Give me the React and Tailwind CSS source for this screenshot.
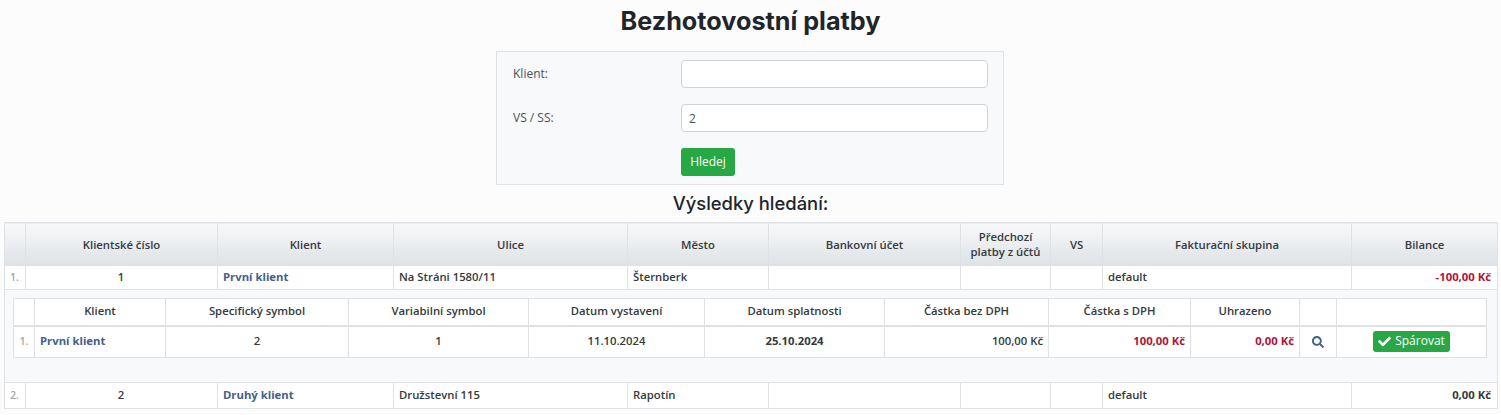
import React from "react";
import { FaCheck, FaSearch } from "react-icons/fa";

const outerCols = [21, 192, 176, 234, 141, 192, 90, 52, 249, 146];
const innerCols = [21, 131, 183, 180, 176, 180, 164, 142, 109, 37, 150];

const thO = "border border-[#dee2e6] bg-gradient-to-b from-[#f8f9fa] to-[#dee2e6] px-1 py-0 text-center font-semibold text-[#343a40] leading-[15px]";
const tdO = "border border-[#dee2e6] bg-white pl-[5px] pr-[6px] py-0 font-semibold text-[#343a40]";
const thI = "border border-[#dee2e6] border-b-2 bg-white px-1 py-0 text-center font-semibold text-[#343a40]";
const tdI = "border border-[#dee2e6] bg-white px-[5px] py-0 font-semibold text-[#343a40]";
const link = "font-bold text-[#456089]";
const red = "font-bold text-[#b01338]";
const idx = "block text-center text-[10px] text-[#a3a3a3]";

function Row({ n, num, name, street, city, balance, balanceClass, h }) {
  return (
    <tr className={h}>
      <td className={tdO}><span className={idx}>{n}</span></td>
      <td className={`${tdO} text-center`}>{num}</td>
      <td className={tdO}><span className={link}>{name}</span></td>
      <td className={tdO}>{street}</td>
      <td className={tdO}>{city}</td>
      <td className={tdO}></td>
      <td className={tdO}></td>
      <td className={tdO}></td>
      <td className={tdO}>default</td>
      <td className={`${tdO} text-right`}><span className={balanceClass}>{balance}</span></td>
    </tr>
  );
}

export default function App() {
  return (
    <div className="min-h-[415px] overflow-hidden bg-[#fcfcfd] font-['Open_Sans',sans-serif] text-[#343a40]">
      <h1 className="pt-[3px] text-center font-['Inter',sans-serif] text-[25.2px] leading-[36px] font-bold text-[#212529]">
        Bezhotovostní platby
      </h1>
      <form className="mt-3 ml-[496px] flex h-[134px] w-[508px] flex-col border border-[#dee2e6] bg-[#f8f9fa] pt-2 pr-[15px] pl-[15px]">
        <div className="flex h-7 items-center">
          <label className="w-[169px] pl-px text-xs text-[#495057]">Klient:</label>
          <input className="h-7 w-[307px] rounded border border-[#ced4da] bg-white px-[7px] text-xs" />
        </div>
        <div className="mt-4 flex h-7 items-center">
          <label className="w-[169px] pl-px text-xs text-[#495057]">VS / SS:</label>
          <input defaultValue="2" className="h-7 w-[307px] rounded border border-[#ced4da] bg-white px-[7px] text-xs text-[#495057]" />
        </div>
        <div className="mt-4 pl-[169px]">
          <button type="button" className="h-7 w-[54px] rounded-[3px] bg-[#28a745] text-xs text-white">Hledej</button>
        </div>
      </form>
      <h2 className="pt-[3px] text-center font-['Inter',sans-serif] text-[18.4px] leading-[30px] font-medium text-[#212529]">
        Výsledky hledání:
      </h2>
      <div className="px-1 pt-[4px]">
        <table className="w-[1493px] table-fixed border-collapse text-[11.3px]">
          <colgroup>{outerCols.map((w, i) => <col key={i} style={{ width: w }} />)}</colgroup>
          <thead>
            <tr className="h-[43px]">
              <th className={thO}></th>
              <th className={thO}>Klientské číslo</th>
              <th className={thO}>Klient</th>
              <th className={thO}>Ulice</th>
              <th className={thO}>Město</th>
              <th className={thO}>Bankovní účet</th>
              <th className={thO}>Předchozí<br />platby z účtů</th>
              <th className={thO}>VS</th>
              <th className={thO}>Fakturační skupina</th>
              <th className={thO}>Bilance</th>
            </tr>
          </thead>
          <tbody>
            <Row h="h-6" n="1." num="1" name="První klient" street="Na Stráni 1580/11" city="Šternberk" balance="-100,00 Kč" balanceClass={red} />
            <tr className="h-[93px]">
              <td colSpan={10} className="border border-[#dee2e6] bg-[#f8f9fa] px-2 pt-2 pb-6 align-top">
                <table className="w-[1473px] table-fixed border-collapse text-[11.3px]">
                  <colgroup>{innerCols.map((w, i) => <col key={i} style={{ width: w }} />)}</colgroup>
                  <thead>
                    <tr className="h-[27px]">
                      <th className={thI}></th>
                      <th className={thI}>Klient</th>
                      <th className={thI}>Specifický symbol</th>
                      <th className={thI}>Variabilní symbol</th>
                      <th className={thI}>Datum vystavení</th>
                      <th className={thI}>Datum splatnosti</th>
                      <th className={thI}>Částka bez DPH</th>
                      <th className={thI}>Částka s DPH</th>
                      <th className={thI}>Uhrazeno</th>
                      <th className={thI}></th>
                      <th className={thI}></th>
                    </tr>
                  </thead>
                  <tbody>
                    <tr className="h-8">
                      <td className={tdI}><span className={idx}>1.</span></td>
                      <td className={tdI}><span className={link}>První klient</span></td>
                      <td className={`${tdI} text-center`}>2</td>
                      <td className={`${tdI} text-center`}>1</td>
                      <td className={`${tdI} text-center`}>11.10.2024</td>
                      <td className={`${tdI} text-center`}><span className="font-bold">25.10.2024</span></td>
                      <td className={`${tdI} text-right`}>100,00 Kč</td>
                      <td className={`${tdI} text-right`}><span className={red}>100,00 Kč</span></td>
                      <td className={`${tdI} text-right`}><span className={red}>0,00 Kč</span></td>
                      <td className={tdI}><FaSearch className="mx-auto h-3 w-3 text-[#456089]" /></td>
                      <td className={`${tdI} text-center`}>
                        <button type="button" className="inline-flex h-[21px] w-[77px] items-center justify-center gap-1 rounded-[3px] bg-[#28a745] text-xs font-normal text-white">
                          <FaCheck className="h-[13px] w-[13px]" />Spárovat
                        </button>
                      </td>
                    </tr>
                  </tbody>
                </table>
              </td>
            </tr>
            <Row h="h-[26px]" n="2." num="2" name="Druhý klient" street="Družstevní 115" city="Rapotín" balance="0,00 Kč" balanceClass="font-bold" />
          </tbody>
        </table>
      </div>
    </div>
  );
}
